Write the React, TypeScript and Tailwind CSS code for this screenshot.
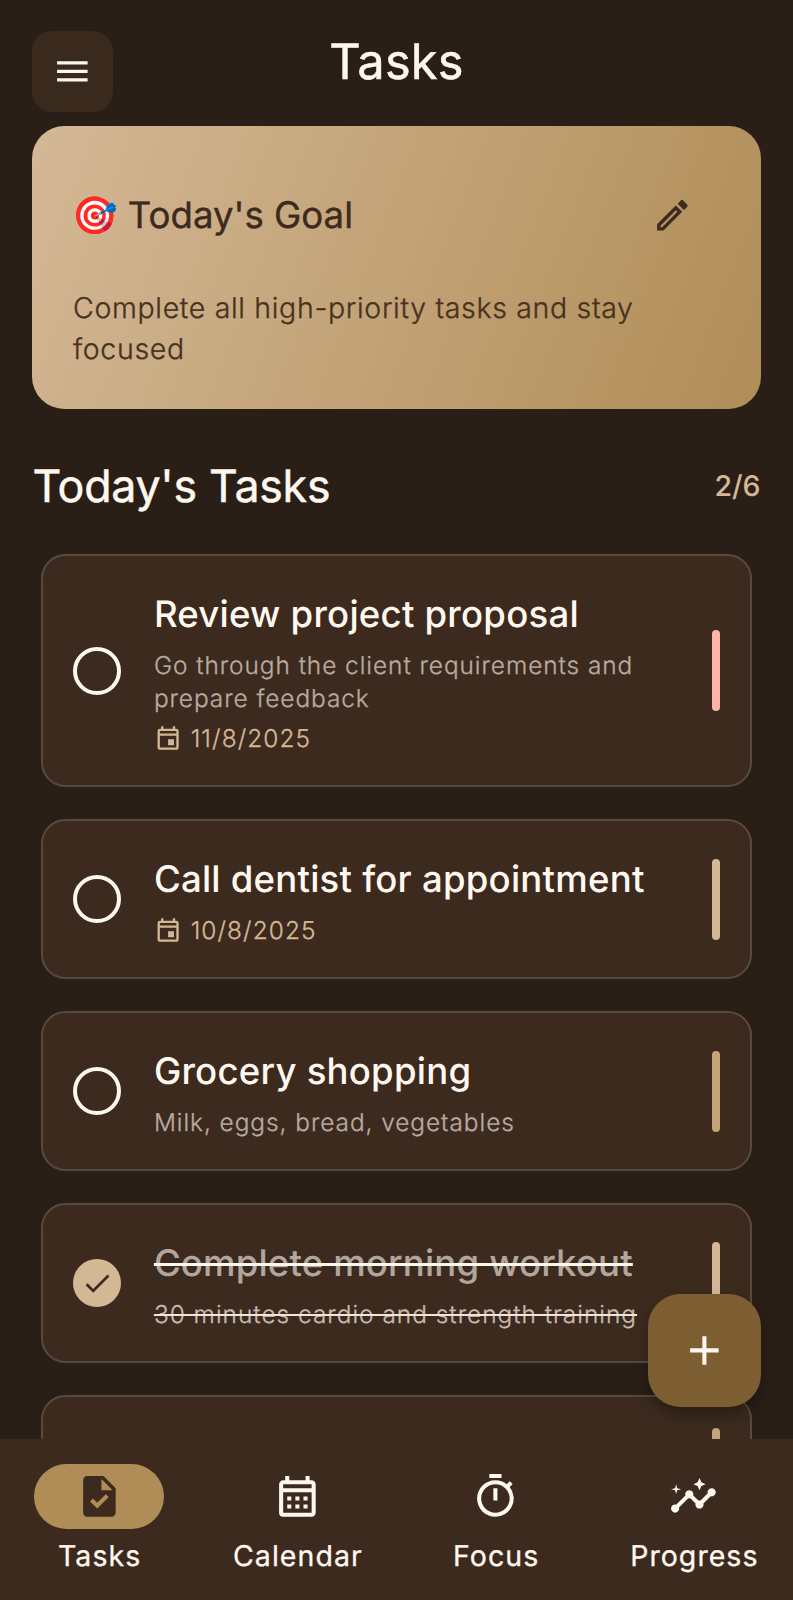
import { MdMenu, MdOutlineEdit, MdOutlineEvent, MdOutlineCalendarMonth, MdOutlineTimer, MdInsights, MdTask, MdCheck, MdAdd } from "react-icons/md";

type Task = {
  title: string;
  note?: string;
  date?: string;
  done?: boolean;
  bar: string;
};

const tasks: Task[] = [
  {
    title: "Review project proposal",
    note: "Go through the client requirements and prepare feedback",
    date: "11/8/2025",
    bar: "bg-[#ffb4ab]",
  },
  { title: "Call dentist for appointment", date: "10/8/2025", bar: "bg-[#d4b896]" },
  { title: "Grocery shopping", note: "Milk, eggs, bread, vegetables", bar: "bg-[#c4a57b]" },
  {
    title: "Complete morning workout",
    note: "30 minutes cardio and strength training",
    done: true,
    bar: "bg-[#d4b896]",
  },
  { title: "", bar: "bg-[#c4a57b]" },
];

function TaskCard({ task }: { task: Task }) {
  return (
    <article className="flex shrink-0 items-center rounded-[24.5px] border-2 border-[#5a493e] bg-[#3c2a1e] pt-[33.7px] pr-[30.3px] pb-[30.7px] pl-[30px]">
      {task.done ? (
        <span className="-mt-[3px] flex size-[48.6px] shrink-0 items-center justify-center rounded-full bg-[#d4b896] text-[32.5px] text-[#3c2a1e]">
          <MdCheck />
        </span>
      ) : (
        <span className="-mt-[3px] size-[48.6px] shrink-0 rounded-full border-4 border-[#fff8f0]" />
      )}
      <div className="ml-[32.7px] min-h-[78px] flex-1">
        <h3
          className={
            task.done
              ? "h-[48.8px] text-[36.6px] leading-[48.8px] font-medium tracking-[0.14px] whitespace-nowrap text-[#b2a59b] line-through decoration-[#fff8f0] decoration-[3px]"
              : "h-[48.8px] text-[36.6px] leading-[48.8px] font-medium tracking-[0.22px] whitespace-nowrap text-[#fff8f0]"
          }
        >
          {task.title}
        </h3>
        {task.note && (
          <p
            className={
              task.done
                ? "mt-[10.2px] text-[24.4px] leading-[32.5px] font-light tracking-[1.01px] whitespace-nowrap text-[#c8baae] line-through decoration-[#f0e6db] decoration-2 [-webkit-text-stroke:0.3px]"
                : "mt-[10.2px] w-[500px] text-[24.4px] leading-[32.5px] font-light tracking-[0.96px] text-[#b8aba0] [-webkit-text-stroke:0.3px]"
            }
          >
            {task.note}
          </p>
        )}
        {task.date && (
          <div className={task.note ? "mt-[8px] flex items-center text-[#d4b896]" : "mt-[10.2px] flex items-center text-[#d4b896]"}>
            <MdOutlineEvent className="size-[28.2px]" />
            <span className="ml-[8.6px] text-[24.4px] leading-[32.5px] font-light tracking-[1.1px] [-webkit-text-stroke:0.3px]">{task.date}</span>
          </div>
        )}
      </div>
      <span className={`-mt-[3px] h-[81px] w-[8px] shrink-0 rounded-full ${task.bar}`} />
    </article>
  );
}

const tabs = [
  { label: "Tasks", Icon: MdTask, active: true },
  { label: "Calendar", Icon: MdOutlineCalendarMonth, active: false },
  { label: "Focus", Icon: MdOutlineTimer, active: false },
  { label: "Progress", Icon: MdInsights, active: false },
];

export default function App() {
  return (
    <div className="relative flex h-[1600px] w-[793px] flex-col overflow-hidden bg-[#2a1f17] font-['Inter','Noto_Color_Emoji',sans-serif] text-[#fff8f0] [text-rendering:geometricPrecision]">
      <header className="grid h-[126px] shrink-0 grid-cols-[1fr_auto_1fr] items-start px-[32px] pt-[31px]">
        <button className="flex size-[81px] items-center justify-center rounded-[20px] bg-[#3a291d] text-[40.7px]">
          <MdMenu />
        </button>
        <h1 className="text-[48.8px] leading-[62px] tracking-[0.2px] [-webkit-text-stroke:0.5px]">Tasks</h1>
      </header>

      <section className="mx-[32px] h-[283px] shrink-0 rounded-[32.5px] bg-[linear-gradient(111.2deg,#d4b896,#b08d57)] pt-[65px] pr-[68.5px] pl-[41px] text-[#3c2a1e]">
        <div className="flex items-center justify-between">
          <h2 className="text-[36.6px] leading-[49px] whitespace-pre [-webkit-text-stroke:0.4px]">
            <span className="-ml-[1px]">🎯</span> Today's Goal
          </h2>
          <MdOutlineEdit className="size-[40.7px]" />
        </div>
        <p className="mt-[48px] w-[600px] text-[28.5px] leading-[40.7px] font-light tracking-[0.67px] text-[#48321f] [-webkit-text-stroke:0.35px]">
          Complete all high-priority tasks and stay focused
        </p>
      </section>

      <div className="mx-[32.5px] mt-[46px] flex h-[63px] shrink-0 items-center justify-between">
        <h2 className="text-[44.7px] leading-[57px] tracking-[-0.25px] [-webkit-text-stroke:0.5px]">Today's Tasks</h2>
        <span className="text-[28.5px] font-medium text-[#d4b896]">2/6</span>
      </div>

      <main className="mx-[40.6px] mt-[36.4px] flex min-h-0 flex-1 flex-col gap-[32px] overflow-hidden">
        {tasks.map((task, i) => (
          <TaskCard key={i} task={task} />
        ))}
      </main>

      <nav className="grid h-[161px] shrink-0 grid-cols-4 bg-[#3c2a1e] pt-[25px]">
        {tabs.map(({ label, Icon, active }) => (
          <div key={label} className="flex flex-col items-center">
            <span
              className={
                active
                  ? "flex h-[65px] w-[130px] items-center justify-center rounded-full bg-[#b08d57] text-[48.8px] text-[#3c2a1e]"
                  : "flex h-[65px] w-[130px] items-center justify-center text-[48.8px]"
              }
            >
              <Icon />
            </span>
            <span className="mt-[6.5px] pl-[1px] text-[28.5px] leading-[40px] tracking-[1.05px] [-webkit-text-stroke:0.3px]">{label}</span>
          </div>
        ))}
      </nav>

      <button className="absolute right-[32px] bottom-[193px] flex size-[113px] items-center justify-center rounded-[32.5px] bg-[#7d5e32] text-[48.8px] shadow-[0_8px_16px_rgba(0,0,0,0.3)]">
        <MdAdd />
      </button>
    </div>
  );
}
